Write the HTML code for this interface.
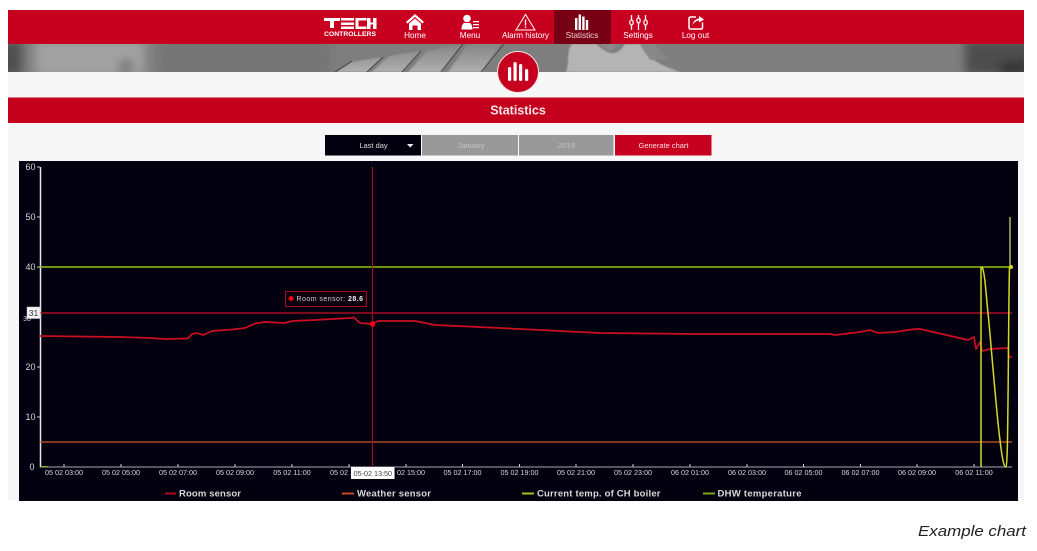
<!DOCTYPE html>
<html><head><meta charset="utf-8"><style>
html,body{margin:0;padding:0;background:#fff}
body{width:1037px;height:551px;overflow:hidden;position:relative}
svg{display:block}
</style></head><body>
<svg width="1037" height="551" viewBox="0 0 1037 551" xmlns="http://www.w3.org/2000/svg" font-family="'Liberation Sans',sans-serif">
<defs>
<filter id="b" x="-20%" y="-100%" width="140%" height="300%"><feGaussianBlur stdDeviation="5"/></filter>
<filter id="b2" x="-20%" y="-100%" width="140%" height="300%"><feGaussianBlur stdDeviation="0.8"/></filter>
<filter id="s" x="-5%" y="-5%" width="110%" height="110%"><feGaussianBlur stdDeviation="0.3"/></filter>
<linearGradient id="pg" x1="0" y1="44" x2="0" y2="72" gradientUnits="userSpaceOnUse"><stop offset="0" stop-color="#858585"/><stop offset="1" stop-color="#aeaeae"/></linearGradient>
<clipPath id="ph"><rect x="8" y="44" width="1016" height="28"/></clipPath>
<clipPath id="cp"><rect x="19" y="161" width="999" height="340"/></clipPath>
</defs>
<rect x="8" y="10" width="1016" height="490" fill="#f7f7f7"/>
<!-- photo -->
<g clip-path="url(#ph)">
<rect x="8" y="44" width="1016" height="28" fill="#7e7e7e"/>
<g filter="url(#b)">
<rect x="-5" y="40" width="27" height="36" fill="#4f4f4f"/>
<rect x="35" y="40" width="110" height="36" fill="#a2a2a2"/>
<rect x="120" y="60" width="12" height="12" fill="#6c6c6c"/>
<rect x="160" y="40" width="170" height="36" fill="#757575"/>
<rect x="965" y="40" width="70" height="36" fill="#4e4e4e"/>
<rect x="1000" y="62" width="30" height="14" fill="#333"/>
</g>
<g filter="url(#b2)">
<path d="M566 72C570 62 566 50 572 44H596C606 52 615 60 625 44H640C645 55 652 62 680 72Z" fill="#b4b4b4"/>
<path d="M600 44H618L610 52Z" fill="#8a8a8a"/>
<path d="M640 44H655L668 60 650 60Z" fill="#888"/>
<path d="M336 72L352 62 382 57 367 72ZM372 72L389 56 420 51 402 72ZM408 72L427 51 462 44 441 72ZM448 72L468 44H500L482 72Z" fill="url(#pg)"/>
</g>
<path d="M335 72L352 61M367 72L383 57M402 72L421 51M441 72L463 44M481 72L504 44" fill="none" stroke="#3e3e3e" stroke-width="0.9"/>
</g>
<!-- nav -->
<rect x="8" y="10" width="1016" height="34" fill="#c8001f"/>
<rect x="554" y="10" width="57" height="34" fill="#780015"/>
<g fill="#fff">
<!-- logo -->
<path d="M324 18h16v3h-6v7h-4v-7h-6zM341 18h13v2.500h-13zM341 22.500h13v2.500h-13zM341 26.500h13v2.500h-13zM355.500 18h11v2.500h-8v6h8v2.500h-11zM367 18h3.500v4.500h2.500V18h3.500v11H373v-4.500h-2.500V29H367z"/>
<text x="324" y="36" font-size="6.600" font-weight="700" textLength="52" lengthAdjust="spacingAndGlyphs">CONTROLLERS</text>
<!-- home -->
<path d="M415 14 L424 22 L422.500 23.500 L415 17 L407.500 23.500 L406 22Z"/>
<path d="M409 23.500L415 18.500 421 23.500V30H417.500V25.500H412.500V30H409Z"/>
<text x="415" y="38" font-size="8.200" text-anchor="middle">Home</text>
<!-- menu -->
<circle cx="467" cy="18.500" r="3.800"/>
<path d="M461.500 29.500c0-2 .5-5.500 2.500-6.500h6c2 1 2.500 4.500 2.500 6.500z"/>
<rect x="473" y="21" width="6" height="1.300"/><rect x="473" y="24" width="6" height="1.300"/><rect x="473" y="27" width="6" height="1.300"/>
<text x="470" y="38" font-size="8.200" text-anchor="middle">Menu</text>
<!-- alarm -->
<path d="M525.500 14.500 L516 30 H535Z" fill="none" stroke="#fff" stroke-width="1"/>
<rect x="524.800" y="19.500" width="1.400" height="6"/><rect x="524.800" y="26.500" width="1.400" height="1.500"/>
<text x="525.500" y="38" font-size="8.200" text-anchor="middle" textLength="47">Alarm history</text>
<!-- stats -->
<rect x="575" y="18" width="2.400" height="12"/><rect x="578.600" y="14.500" width="2.400" height="15.500"/><rect x="582.200" y="16.500" width="2.400" height="13.500"/><rect x="585.800" y="20" width="2.400" height="10"/>
<text x="582" y="38" font-size="8.200" text-anchor="middle" fill="#e8d0d4">Statistics</text>
<!-- settings -->
<g fill="none" stroke="#fff" stroke-width="1.300">
<path d="M631.500 15V20M631.500 25V30M638.500 15V18M638.500 23V30M645.500 15V20M645.500 25V30"/>
<ellipse cx="631.500" cy="22.500" rx="1.700" ry="2.500"/><ellipse cx="638.500" cy="20.500" rx="1.700" ry="2.500"/><ellipse cx="645.500" cy="22.500" rx="1.700" ry="2.500"/>
</g>
<text x="638" y="38" font-size="8.200" text-anchor="middle">Settings</text>
<!-- logout -->
<path d="M696 17H690.500Q689 17 689 18.500V27.500Q689 29 690.500 29H701Q702.500 29 702.500 27.500V22.500" fill="none" stroke="#fff" stroke-width="1.500"/>
<path d="M692.500 25C693.500 20.500 696 19 699 18.500V16L704 19.500 699 22.500V20.500C696.500 20.700 694.500 22 692.500 25Z"/>
<text x="695.500" y="38" font-size="8.200" text-anchor="middle">Log out</text>
</g>
<!-- circle -->
<circle cx="518" cy="72" r="20.500" fill="#c8001f" stroke="#f4e4e6" stroke-width="1"/>
<g fill="#fff">
<rect x="508" y="67" width="3.200" height="14" rx="1.500"/><rect x="513.500" y="62" width="3.200" height="19" rx="1.500"/><rect x="519" y="64" width="3.200" height="17" rx="1.500"/><rect x="525" y="69" width="3.200" height="12" rx="1.500"/>
</g>
<!-- title bar -->
<rect x="8" y="97.500" width="1016" height="25.500" fill="#c4001d"/>
<text x="518" y="114.500" font-size="12.500" font-weight="700" fill="#f3e3e5" text-anchor="middle">Statistics</text>
<!-- controls -->
<rect x="325" y="135" width="96" height="20.500" fill="#03000f"/>
<text x="373.500" y="148" font-size="7.500" fill="#ddd" text-anchor="middle">Last day</text>
<path d="M407 144H413.500L410.200 147.500Z" fill="#eee"/>
<rect x="422" y="135" width="96" height="20.500" fill="#999"/>
<text x="471" y="148" font-size="7.500" fill="#c4c4c4" text-anchor="middle">January</text>
<rect x="519" y="135" width="94.500" height="20.500" fill="#999"/>
<text x="566.500" y="148" font-size="7.500" fill="#c4c4c4" text-anchor="middle">2019</text>
<rect x="615" y="135" width="96.500" height="20.500" fill="#c8001f"/>
<text x="663.500" y="148" font-size="7.500" fill="#f3dfe2" text-anchor="middle">Generate chart</text>
<!-- chart -->
<rect x="19" y="161" width="999" height="340" fill="#03000f"/>
<g clip-path="url(#cp)" filter="url(#s)">
<!-- y axis -->
<path d="M40.500 167V467" stroke="#e8e8e8" stroke-width="1.500" fill="none"/>
<path d="M37 167H40M37 217H40M37 267H40M37 367H40M37 417H40" stroke="#ccc" stroke-width="1" fill="none"/>
<g font-size="9" fill="#d8d8d8" text-anchor="middle">
<text x="30.500" y="170">60</text><text x="30.500" y="220">50</text><text x="30.500" y="270">40</text><text x="27" y="321" font-size="7">30</text><text x="30.500" y="370">20</text><text x="30.500" y="420">10</text><text x="32" y="470">0</text>
</g>
<path d="M40 467H1012" stroke="#a8a8ae" stroke-width="1.100" fill="none"/>
<path d="M41 466.500H48" stroke="#7fb010" stroke-width="1" fill="none"/>
<!-- ticks -->
<path d="M64 464V467M121 464V467M178 464V467M235 464V467M292 464V467M349 464V467M406 464V467M462.500 464V467M519.500 464V467M576 464V467M633 464V467M690 464V467M747 464V467M803.500 464V467M860.500 464V467M917 464V467M974 464V467" stroke="#ccc" stroke-width="1" fill="none"/>
<g font-size="7.200" fill="#d8d8d8" text-anchor="middle">
<text x="64" y="475">05 02 03:00</text><text x="121" y="475">05 02 05:00</text><text x="178" y="475">05 02 07:00</text><text x="235" y="475">05 02 09:00</text><text x="292" y="475">05 02 11:00</text><text x="349" y="475">05 02 13:00</text><text x="406" y="475">05 02 15:00</text><text x="462.500" y="475">05 02 17:00</text><text x="519.500" y="475">05 02 19:00</text><text x="576" y="475">05 02 21:00</text><text x="633" y="475">05 02 23:00</text><text x="690" y="475">06 02 01:00</text><text x="747" y="475">06 02 03:00</text><text x="803.500" y="475">06 02 05:00</text><text x="860.500" y="475">06 02 07:00</text><text x="917" y="475">06 02 09:00</text><text x="974" y="475">06 02 11:00</text>
</g>
<!-- lines -->
<path d="M40 267H1012" stroke="#8dc414" stroke-width="1.400" fill="none"/>
<path d="M40 442H1012" stroke="#cc5a2a" stroke-width="1.200" fill="none"/>
<path d="M40 313H1012" stroke="#c81228" stroke-width="1.300" fill="none"/>
<path d="M372.500 167V467" stroke="#a80f22" stroke-width="1.100" fill="none"/>
<path d="M40 336L120 337 150 338 165 339 188 338.500 192 334 197 333 203 335 212 331 225 330 232 329.500 245 328 255 323.500 265 322 285 323 292 321 315 320 350 318 354 317.500 360 323 372 324 378 321 415 321 435 325 500 328 600 333 700 334 830 334 835 335 860 332 870 330 878 333 895 332 915 329 920 329 968 340 974 337 976 349 980 342 982 351 990 349 1008 348 1009 357 1012 357" stroke="#cc1024" stroke-width="1.700" fill="none" stroke-linejoin="round"/>
<circle cx="372.500" cy="324" r="2.800" fill="#f00012"/>
<path d="M981 467V267" stroke="#d4da22" stroke-width="1.500" fill="none"/>
<path d="M982 267C985 272 986 295 988 313S997 420 1000 440C1002 458 1004 467 1005.500 467C1007.500 467 1007.500 440 1008 400S1008.800 290 1009.500 267" stroke="#d4da22" stroke-width="1.500" fill="none"/>
<path d="M1010 217V267" stroke="#e0e47a" stroke-width="1.200" fill="none"/>
<circle cx="1011" cy="267" r="2" fill="#d4da22"/>
<!-- 31 label -->
<rect x="27" y="307" width="13" height="11.500" fill="#f4f4f4" stroke="#ccc" stroke-width=".5"/>
<text x="33.500" y="316" font-size="8.500" fill="#333" text-anchor="middle">31</text>
<!-- time label -->
<rect x="351" y="467" width="43.500" height="12" fill="#fff"/>
<text x="372.800" y="475.800" font-size="7.200" fill="#444" text-anchor="middle">05-02 13:50</text>
<!-- tooltip -->
<rect x="285.500" y="291.500" width="81" height="15" fill="#08020f" stroke="#a80f22" stroke-width="1"/>
<circle cx="291" cy="298.500" r="2.500" fill="#f00012"/>
<text x="296.500" y="301" font-size="7" fill="#d0d0d0" textLength="66.500">Room sensor: <tspan font-weight="700" fill="#eee">28.6</tspan></text>
<!-- legend -->
<g font-size="9.500" font-weight="700" fill="#d8d8d8">
<rect x="165" y="492.500" width="11" height="2" fill="#b01024"/>
<text x="179" y="496.500" textLength="62">Room sensor</text>
<rect x="342" y="492.500" width="12" height="2" fill="#c04a20"/>
<text x="357" y="496.500" textLength="74">Weather sensor</text>
<rect x="522" y="492.500" width="12" height="2" fill="#b4bc12"/>
<text x="537" y="496.500" textLength="123.500">Current temp. of CH boiler</text>
<rect x="703" y="492.500" width="12" height="2" fill="#76a616"/>
<text x="717.500" y="496.500" textLength="84">DHW temperature</text>
</g>
</g>
<text x="918" y="536" font-size="15" font-style="italic" fill="#222" font-family="'Liberation Sans',sans-serif" textLength="108" lengthAdjust="spacingAndGlyphs">Example chart</text>
</svg>
</body></html>
